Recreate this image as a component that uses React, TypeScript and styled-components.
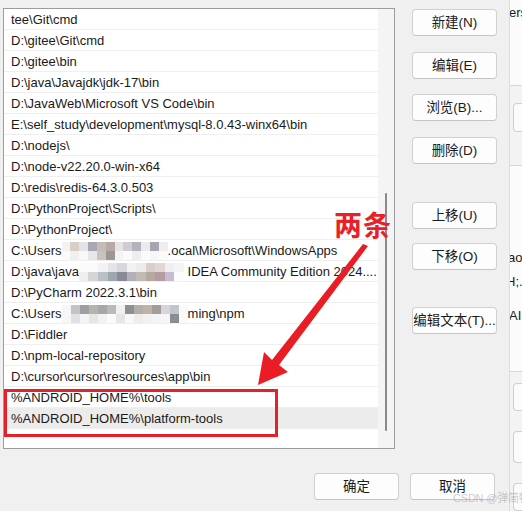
import React from "react";
import styled, { createGlobalStyle } from "styled-components";

const Global = createGlobalStyle`
  html, body { margin: 0; padding: 0; background: #f0f0f0; }
  body { width: 522px; height: 511px; overflow: hidden; font-family: "Liberation Sans", "Noto Sans CJK SC", sans-serif; }
`;

const FONT = `"Liberation Sans", "Noto Sans CJK SC", sans-serif`;

const Page = styled.div`
  display: flex;
  width: 522px;
  height: 511px;
  overflow: hidden;
`;

const Dialog = styled.div`
  position: relative;
  width: 510px;
  flex: none;
  box-sizing: border-box;
  background: #f0f0f0;
  border-right: 1px solid #dcdcdc;
  padding: 8px 0 0 3px;
  display: flex;
  flex-direction: column;
  z-index: 1;
`;

const Main = styled.div`
  display: flex;
  gap: 17px;
`;

const ListBox = styled.div`
  width: 392px;
  height: 441px;
  box-sizing: border-box;
  border: 1px solid #9c9c9c;
  background: #ffffff;
  display: flex;
`;

const Rows = styled.div`
  flex: 1;
  min-width: 0;
  display: flex;
  flex-direction: column;
  overflow: hidden;
`;

const Row = styled.div<{ $selected?: boolean }>`
  height: 21px;
  flex: none;
  box-sizing: border-box;
  border-bottom: 1px solid #efefef;
  background: ${(p) => (p.$selected ? "#ececec" : "#ffffff")};
  padding: 2px 0 0 7px;
  font-family: ${FONT};
  font-size: 13px;
  line-height: 18px;
  color: #1a1a1a;
  white-space: nowrap;
  overflow: hidden;
  display: flex;
  align-items: center;
`;

const ScrollTrack = styled.div`
  width: 16px;
  flex: none;
  background: #f4f4f4;
  display: flex;
  justify-content: center;
  padding-top: 184px;
  box-sizing: border-box;
`;

const Thumb = styled.div`
  width: 2px;
  height: 238px;
  background: #8a8a8a;
  border-radius: 1px;
`;

const MosaicBox = styled.span<{ $w: number }>`
  display: inline-grid;
  grid-auto-flow: column;
  grid-template-rows: 9px 9px;
  width: ${(p) => p.$w}px;
  height: 18px;
  flex: none;
  filter: blur(0.4px);
`;

const Cell = styled.span`
  display: block;
`;

const Mosaic: React.FC<{ w: number; colors: string[] }> = ({ w, colors }) => (
  <MosaicBox $w={w}>
    {colors.map((c, i) => (
      <Cell key={i} style={{ background: c }} />
    ))}
  </MosaicBox>
);

const m1 = [
  "#f4f2f0", "#fbfbfb", "#d6cfc8", "#f2f0ee", "#e4e2e6", "#f8f8f8", "#a9a7b0", "#e8e6e8",
  "#c4bcb6", "#c9c3c0", "#b7aaa6", "#9e9694", "#e6e3e5", "#f4f4f4", "#d0cdd2", "#fafafa",
  "#b4b2ba", "#eeeeee", "#ecebec", "#fbfbfb", "#a6a6b2", "#f6f6f6", "#eeeeee", "#fafafa",
];
const m2 = [
  "#fbfbfb", "#f0eff0", "#fafafa", "#d6d4d6", "#f2f2f2", "#b9c1c6", "#e4e4e6", "#9ea6ae",
  "#d8d8dc", "#8a8a96", "#f2f2f2", "#b3b0bc", "#eceaea", "#c3bab2", "#d9cfc8", "#b5a9a0",
  "#e2d6d6", "#b59ca4", "#f0eef2", "#c7bdd0", "#f4f4f4", "#fcfcfc",
];
const m3 = [
  "#f6f6f6", "#f6f6f6", "#c4c2c6", "#e2e2e4", "#9e9ea4", "#f4f4f4", "#b6b2ae", "#e8e6e4",
  "#a4a8a6", "#f2f2f2", "#bcb8b6", "#fafafa", "#f0f0f0", "#e6e6e6", "#8e8e94", "#f8f8f8",
  "#b4aca8", "#ecece8", "#c0b2a6", "#f2f2f2", "#a49c98", "#f4f4f4", "#d6d4dc", "#f6f6f6",
  "#c4c4cc", "#8c8c94", "#fafafa", "#fafafa",
];

type Item = { text: React.ReactNode; selected?: boolean };

const items: Item[] = [
  { text: "tee\\Git\\cmd" },
  { text: "D:\\gitee\\Git\\cmd" },
  { text: "D:\\gitee\\bin" },
  { text: "D:\\java\\Javajdk\\jdk-17\\bin" },
  { text: "D:\\JavaWeb\\Microsoft VS Code\\bin" },
  { text: "E:\\self_study\\development\\mysql-8.0.43-winx64\\bin" },
  { text: "D:\\nodejs\\" },
  { text: "D:\\node-v22.20.0-win-x64" },
  { text: "D:\\redis\\redis-64.3.0.503" },
  { text: "D:\\PythonProject\\Scripts\\" },
  { text: "D:\\PythonProject\\" },
  {
    text: (
      <>
        C:\Users
        <Mosaic w={106} colors={m1} />
        .ocal\Microsoft\WindowsApps
      </>
    ),
  },
  {
    text: (
      <>
        D:\java\java
        <Mosaic w={105} colors={m2} />
        &nbsp;IDEA Community Edition 2024....
      </>
    ),
  },
  { text: "D:\\PyCharm 2022.3.1\\bin" },
  {
    text: (
      <>
        C:\Users
        <Mosaic w={126} colors={m3} />
        ming\npm
      </>
    ),
  },
  { text: "D:\\Fiddler" },
  { text: "D:\\npm-local-repository" },
  { text: "D:\\cursor\\cursor\\resources\\app\\bin" },
  { text: "%ANDROID_HOME%\\tools" },
  { text: "%ANDROID_HOME%\\platform-tools", selected: true },
];

const ButtonCol = styled.div`
  width: 85px;
  display: flex;
  flex-direction: column;
  padding-top: 1px;
`;

const Btn = styled.button<{ $mt?: number }>`
  width: 85px;
  height: 27px;
  margin-top: ${(p) => p.$mt ?? 0}px;
  box-sizing: border-box;
  border: 1px solid #d0d0d0;
  border-bottom-color: #c4c4c4;
  border-radius: 4px;
  background: #fdfdfd;
  font-family: ${FONT};
  font-size: 13.5px;
  color: #1a1a1a;
  padding: 0;
  line-height: 25px;
  white-space: nowrap;
`;

const Footer = styled.div`
  display: flex;
  justify-content: flex-end;
  gap: 11px;
  margin-top: 24px;
  padding-right: 14px;
`;

const Highlight = styled.div`
  position: absolute;
  left: 4px;
  top: 389px;
  width: 274px;
  height: 48px;
  box-sizing: border-box;
  border: 3px solid #e8202a;
  pointer-events: none;
`;

const Note = styled.div`
  position: absolute;
  left: 334px;
  top: 204px;
  font-family: "Noto Sans CJK SC", sans-serif;
  font-weight: 700;
  font-size: 28px;
  line-height: 40px;
  color: #e8202a;
  letter-spacing: 1px;
`;

const ArrowSvg = styled.svg`
  position: absolute;
  left: 0;
  top: 0;
  pointer-events: none;
`;

const Watermark = styled.div`
  position: absolute;
  left: 453px;
  top: 491px;
  font-family: ${FONT};
  font-size: 11px;
  line-height: 14px;
  letter-spacing: -0.2px;
  color: rgba(160, 160, 160, 0.55);
  white-space: nowrap;
`;

const BackWindow = styled.div`
  flex: 1;
  display: flex;
  flex-direction: column;
  overflow: hidden;
  font-family: ${FONT};
  font-size: 13px;
  color: #1a1a1a;
`;

const Seg = styled.div<{ $h: number; $bg: string; $line?: boolean }>`
  height: ${(p) => p.$h}px;
  flex: none;
  background: ${(p) => p.$bg};
  border-bottom: ${(p) => (p.$line ? "1px solid #d6d6d6" : "none")};
  box-sizing: border-box;
  display: flex;
  flex-direction: column;
`;

const Frag = styled.span<{ $top: number; $indent: number }>`
  margin-top: ${(p) => p.$top}px;
  margin-left: -${(p) => p.$indent}px;
  white-space: nowrap;
  line-height: 16px;
`;

const EdgeBox = styled.div<{ $top: number; $h: number }>`
  margin-top: ${(p) => p.$top}px;
  margin-left: 3px;
  height: ${(p) => p.$h}px;
  border: 1px solid #cfcfcf;
  border-right: none;
  border-radius: 4px 0 0 4px;
  background: #fbfbfb;
`;

export default function App() {
  return (
    <>
      <Global />
      <Page>
        <Dialog>
          <Main>
            <ListBox>
              <Rows>
                {items.map((it, i) => (
                  <Row key={i} $selected={it.selected}>
                    {it.text}
                  </Row>
                ))}
              </Rows>
              <ScrollTrack>
                <Thumb />
              </ScrollTrack>
            </ListBox>
            <ButtonCol>
              <Btn>新建(N)</Btn>
              <Btn $mt={16}>编辑(E)</Btn>
              <Btn $mt={15}>浏览(B)...</Btn>
              <Btn $mt={16}>删除(D)</Btn>
              <Btn $mt={38}>上移(U)</Btn>
              <Btn $mt={14}>下移(O)</Btn>
              <Btn $mt={37}>编辑文本(T)...</Btn>
            </ButtonCol>
          </Main>
          <Footer>
            <Btn>确定</Btn>
            <Btn>取消</Btn>
          </Footer>
          <Highlight />
          <Note>两条</Note>
          <ArrowSvg width="510" height="511" viewBox="0 0 510 511">
            <polygon
              points="363,244 368,246 279,365 288,372 258,385 264,352 272,360"
              fill="#ea1d25"
            />
          </ArrowSvg>
          <Watermark>CSDN @弹简特</Watermark>
        </Dialog>
        <BackWindow>
          <Seg $h={86} $bg="#fbfbfb" $line>
            <Frag $top={5} $indent={1}>ers</Frag>
          </Seg>
          <Seg $h={80} $bg="#f3f3f3" $line>
            <EdgeBox $top={17} $h={27} />
          </Seg>
          <Seg $h={206} $bg="#fbfbfb" $line>
            <Frag $top={84} $indent={2}>ao</Frag>
            <Frag $top={8} $indent={4}>H;.l</Frag>
            <Frag $top={18} $indent={1}>AI</Frag>
          </Seg>
          <Seg $h={139} $bg="#f3f3f3">
            <EdgeBox $top={11} $h={29} />
            <EdgeBox $top={20} $h={34} />
            <EdgeBox $top={20} $h={30} />
          </Seg>
        </BackWindow>
      </Page>
    </>
  );
}
